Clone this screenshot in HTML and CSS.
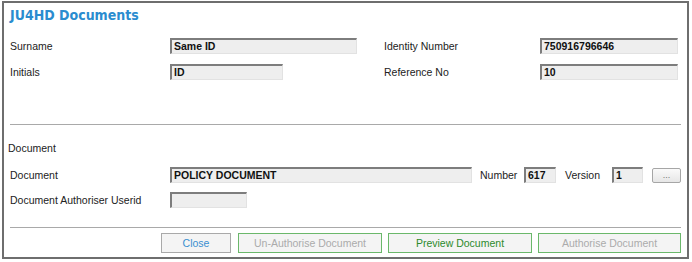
FILE: index.html
```html
<!DOCTYPE html>
<html>
<head>
<meta charset="utf-8">
<link rel="stylesheet" href="styles.css">
</head>
<body>
<div class="frame">
  <div class="title">JU4HD Documents</div>

  <div class="row row-first">
    <span class="lbl w160">Surname</span>
    <div class="cell w214"><span class="inp w187">Same ID</span></div>
    <span class="lbl w156">Identity Number</span>
    <span class="inp w138">750916796646</span>
  </div>
  <div class="row row-second">
    <span class="lbl w160">Initials</span>
    <div class="cell w214"><span class="inp w113">ID</span></div>
    <span class="lbl w156">Reference No</span>
    <span class="inp w138">10</span>
  </div>

  <div class="sep sep-top"></div>

  <div class="section">Document</div>

  <div class="row row-doc">
    <span class="lbl w160">Document</span>
    <span class="inp w302">POLICY DOCUMENT</span>
    <span class="lbl small-lbl num-lbl">Number</span>
    <span class="inp w32">617</span>
    <span class="lbl small-lbl ver-lbl">Version</span>
    <span class="inp w31">1</span>
    <button class="dots">...</button>
  </div>
  <div class="row row-auth">
    <span class="lbl w160">Document Authoriser Userid</span>
    <span class="inp w77"></span>
  </div>

  <div class="sep sep-bottom"></div>

  <div class="buttons">
    <button class="btn btn-close">Close</button>
    <button class="btn btn-green btn-disabled">Un-Authorise Document</button>
    <button class="btn btn-green btn-preview">Preview Document</button>
    <button class="btn btn-green btn-disabled btn-last">Authorise Document</button>
  </div>
</div>
</body>
</html>
```

FILE: styles.css
```css
html, body {
  margin: 0;
  padding: 0;
  background: #ffffff;
}

body {
  font-family: "Liberation Sans", Arial, sans-serif;
  font-size: 10.5px;
  color: #222;
}

.frame {
  box-sizing: border-box;
  margin: 1px 3px 0 2px;
  width: 687px;
  height: 258px;
  border: 2px solid #6e6e6e;
  padding: 0 6px 0 6px;
}

.title {
  padding-top: 3px;
  height: 18px;
  line-height: 18px;
  font-family: "DejaVu Sans Condensed", "DejaVu Sans", Verdana, sans-serif;
  font-weight: bold;
  font-size: 14px;
  color: #2a8ccf;
}

.row {
  display: flex;
  align-items: center;
  height: 16px;
}

.row-first { margin-top: 14px; }
.row-second { margin-top: 10px; }
.row-doc { margin-top: 12px; }
.row-auth { margin-top: 9px; }

.lbl {
  flex: none;
  white-space: nowrap;
  color: #222;
}

.cell { flex: none; display: flex; }

.w160 { width: 160px; }
.w214 { width: 214px; }
.w156 { width: 156px; }

.inp {
  flex: none;
  box-sizing: border-box;
  height: 16px;
  line-height: 13px;
  padding-left: 2px;
  background: #eeeeee;
  border-top: 2px solid #7d7d7d;
  border-left: 2px solid #7d7d7d;
  border-right: 1px solid #e2e2e2;
  border-bottom: 1px solid #e2e2e2;
  font-weight: bold;
  color: #111;
  white-space: nowrap;
  overflow: hidden;
}

.w187 { width: 187px; }
.w113 { width: 113px; }
.w138 { width: 138px; }
.w302 { width: 302px; }
.w32 { width: 32px; }
.w31 { width: 31px; }
.w77 { width: 77px; }

.num-lbl { margin-left: 8px; width: 44px; }
.ver-lbl { margin-left: 9px; width: 47px; }

.dots {
  margin-left: 9px;
  box-sizing: border-box;
  width: 29px;
  height: 15px;
  margin-top: 1px;
  padding: 0;
  border: 1px solid #a6a6a6;
  border-radius: 2px;
  background: linear-gradient(#fafafa, #e6e6e6);
  font-family: "Liberation Sans", Arial, sans-serif;
  font-size: 9px;
  line-height: 11px;
  color: #777;
}

.sep {
  height: 1px;
  background: #a9a9a9;
}

.sep-top { margin-top: 44px; }
.sep-bottom { margin-top: 19px; }

.section {
  margin-top: 16px;
  margin-left: -2px;
  height: 14px;
  line-height: 14px;
}

.buttons {
  display: flex;
  justify-content: flex-end;
  margin-top: 5px;
}

.btn {
  box-sizing: border-box;
  height: 20px;
  padding: 0;
  background: #f4f4f4;
  font-family: "Liberation Sans", Arial, sans-serif;
  font-size: 10.5px;
  line-height: 16px;
}

.btn-close {
  width: 70px;
  border: 1px solid #a9a9a9;
  color: #3a8fd0;
  margin-right: 7px;
}

.btn-green {
  width: 144px;
  border: 1px solid #6bb86b;
  margin-right: 6px;
}

.btn-disabled { color: #ababab; }
.btn-preview { color: #2c8a2c; }
.btn-last { margin-right: 0; width: 143px; }
```
